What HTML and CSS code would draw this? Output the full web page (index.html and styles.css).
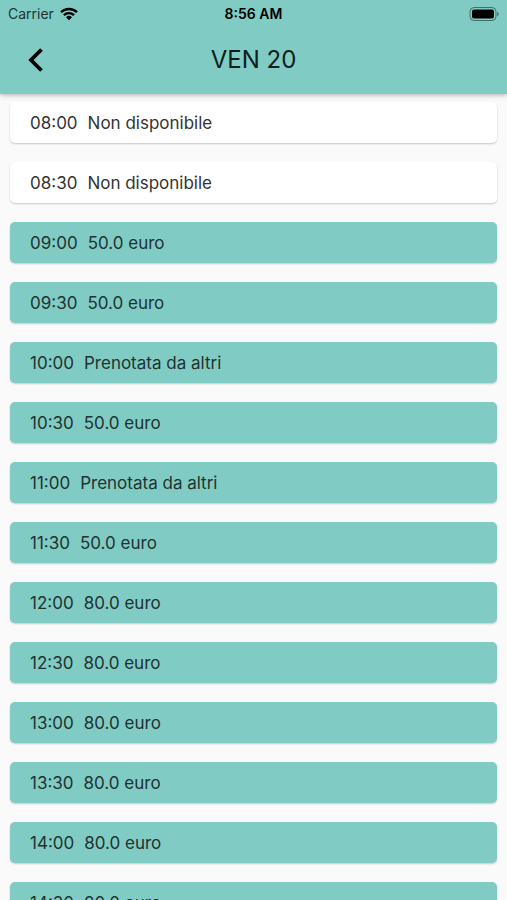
FILE: index.html
```html
<!DOCTYPE html>
<html lang="it">
<head>
  <meta charset="UTF-8">
  <meta name="viewport" content="width=device-width, initial-scale=1.0">
  <title>VEN 20</title>
  <link rel="stylesheet" href="styles.css">
</head>
<body>

  <header class="app-bar">
    <div class="status-bar">
      <div class="carrier">
        <span>Carrier</span>
        <svg class="wifi" viewBox="0 0 18 14" aria-hidden="true">
          <path d="M1 5.2a11.6 11.6 0 0 1 16 0M3.9 8.2a7.4 7.4 0 0 1 10.2 0" fill="none" stroke="#000" stroke-width="2.3"/>
          <path d="M9 13.2L6 10.3a4.3 4.3 0 0 1 6 0z"/>
        </svg>
      </div>
      <span class="clock">8:56 AM</span>
      <svg class="battery" viewBox="0 0 30 14" aria-hidden="true">
        <rect x="1" y=".5" width="26" height="13" rx="4" fill="none" stroke="#000" stroke-opacity=".45"/>
        <rect x="3" y="2.5" width="22" height="9" rx="2"/>
        <path d="M28.3 4.7c1.8.8 1.8 3.8 0 4.6z" fill-opacity=".5"/>
      </svg>
    </div>
    <div class="toolbar">
      <button type="button" class="back" aria-label="Indietro">
        <svg viewBox="0 0 16 24" aria-hidden="true">
          <path d="M13.5 1.500L3 12l10.500 10.500" fill="none" stroke="#000" stroke-width="3.800"/>
        </svg>
      </button>
      <h1>VEN 20</h1>
    </div>
  </header>

  <main>
    <ul class="slots">
      <li><button type="button" class="slot unavailable" disabled><time>08:00</time><span>Non disponibile</span></button></li>
      <li><button type="button" class="slot unavailable" disabled><time>08:30</time><span>Non disponibile</span></button></li>
      <li><button type="button" class="slot"><time>09:00</time><span>50.0 euro</span></button></li>
      <li><button type="button" class="slot"><time>09:30</time><span>50.0 euro</span></button></li>
      <li><button type="button" class="slot"><time>10:00</time><span>Prenotata da altri</span></button></li>
      <li><button type="button" class="slot"><time>10:30</time><span>50.0 euro</span></button></li>
      <li><button type="button" class="slot"><time>11:00</time><span>Prenotata da altri</span></button></li>
      <li><button type="button" class="slot"><time>11:30</time><span>50.0 euro</span></button></li>
      <li><button type="button" class="slot"><time>12:00</time><span>80.0 euro</span></button></li>
      <li><button type="button" class="slot"><time>12:30</time><span>80.0 euro</span></button></li>
      <li><button type="button" class="slot"><time>13:00</time><span>80.0 euro</span></button></li>
      <li><button type="button" class="slot"><time>13:30</time><span>80.0 euro</span></button></li>
      <li><button type="button" class="slot"><time>14:00</time><span>80.0 euro</span></button></li>
      <li><button type="button" class="slot"><time>14:30</time><span>80.0 euro</span></button></li>
    </ul>
  </main>

</body>
</html>
```

FILE: styles.css
```css
/* General Styles */
* {
  box-sizing: border-box;
}

body {
  font-family: Inter, 'Liberation Sans', sans-serif;
  background-color: #fafafa;
  color: #000;
  margin: 0;
  height: 100vh;
  display: flex;
  flex-direction: column;
}

/* App Bar */
.app-bar {
  background-color: #80cbc4;
  box-shadow: 0 1px 5px rgba(0, 0, 0, 0.3);
  z-index: 1;
}

.status-bar,
.toolbar {
  display: grid;
  grid-template-columns: 1fr auto 1fr;
  align-items: center;
}

.status-bar {
  height: 27px;
  padding: 0 8px;
  font-size: 14px;
}

.carrier {
  display: flex;
  align-items: center;
  gap: 6px;
  color: #1d3532;
}

.wifi {
  width: 18px;
  height: 14px;
}

.clock {
  font-weight: 600;
}

.battery {
  width: 30px;
  height: 14px;
  justify-self: end;
}

.toolbar {
  height: 67px;
  padding: 0 20px 2px;
}

.back {
  display: flex;
  justify-self: start;
  padding: 4px 8px;
  border: none;
  background: none;
  cursor: pointer;
}

.back svg {
  width: 16px;
  height: 24px;
}

h1 {
  margin: 0;
  font-size: 24px;
  font-weight: 400;
  color: #0d1f1d;
}

/* Time Slots */
main {
  flex: 1;
  min-height: 0;
  overflow-y: auto;
  scrollbar-width: none;
}

.slots {
  list-style: none;
  margin: 0;
  padding: 8px 10px;
  display: flex;
  flex-direction: column;
  gap: 19px;
}

.slot {
  display: flex;
  align-items: center;
  gap: 10px;
  width: 100%;
  height: 41px;
  padding: 0 20px;
  border: none;
  border-radius: 5px;
  background-color: #80cbc4;
  box-shadow: 0 1px 2px rgba(0, 0, 0, 0.2);
  font-family: inherit;
  font-size: 17px;
  color: #1f3330;
  cursor: pointer;
}

.unavailable {
  background-color: #fff;
  color: #333;
  cursor: default;
}
```
